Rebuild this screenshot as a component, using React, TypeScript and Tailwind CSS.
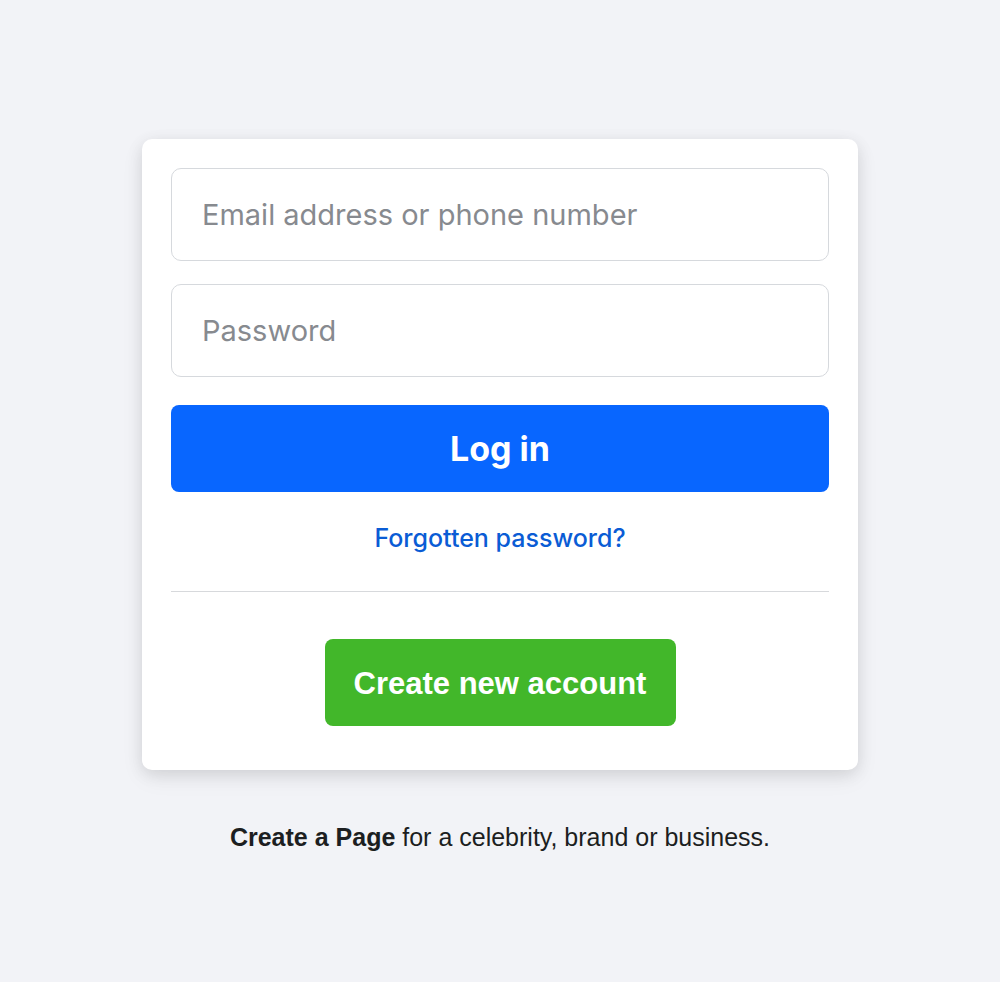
export default function App() {
  return (
    <div className="min-h-[982px] bg-[#f2f3f7] flex flex-col items-center pt-[139px]">
      {/* Login card */}
      <div className="w-[716px] bg-white rounded-[10px] shadow-[0_4px_16px_rgba(0,0,0,0.1),0_8px_24px_rgba(0,0,0,0.06)] px-[29px] pt-[29px] pb-[44px] flex flex-col">
        <input
          type="text"
          placeholder="Email address or phone number"
          className="h-[93px] w-full rounded-[10px] border border-[#d6d9dd] px-[30px] text-[29px] text-[#1c1e21] placeholder:text-[#878a8f] outline-none font-['Inter',sans-serif]"
        />
        <input
          type="password"
          placeholder="Password"
          className="mt-[23px] h-[93px] w-full rounded-[10px] border border-[#d6d9dd] px-[30px] text-[29px] text-[#1c1e21] placeholder:text-[#878a8f] outline-none font-['Inter',sans-serif]"
        />
        <button className="mt-[28px] h-[87px] w-full rounded-[8px] bg-[#0866ff] text-white text-[34px] font-bold font-['Inter',sans-serif]">
          Log in
        </button>
        <a
          href="#"
          className="mt-[28px] self-center text-[25px] font-medium leading-[36px] text-[#0a5cd5] font-['Inter',sans-serif]"
        >
          Forgotten password?
        </a>
        <div className="mt-[35px] h-px w-full bg-[#d7d9dc]" />
        <button className="mt-[47px] self-center h-[87px] w-[351px] rounded-[8px] bg-[#42b72a] pt-[4px] text-white text-[31px] font-bold font-['Liberation_Sans',Arial,sans-serif]">
          Create new account
        </button>
      </div>

      <p className="mt-[49px] text-[25px] text-[#1c1e21] font-['Liberation_Sans',Arial,sans-serif]">
        <a href="#" className="font-bold">
          Create a Page
        </a>{' '}
        for a celebrity, brand or business.
      </p>
    </div>
  );
}
